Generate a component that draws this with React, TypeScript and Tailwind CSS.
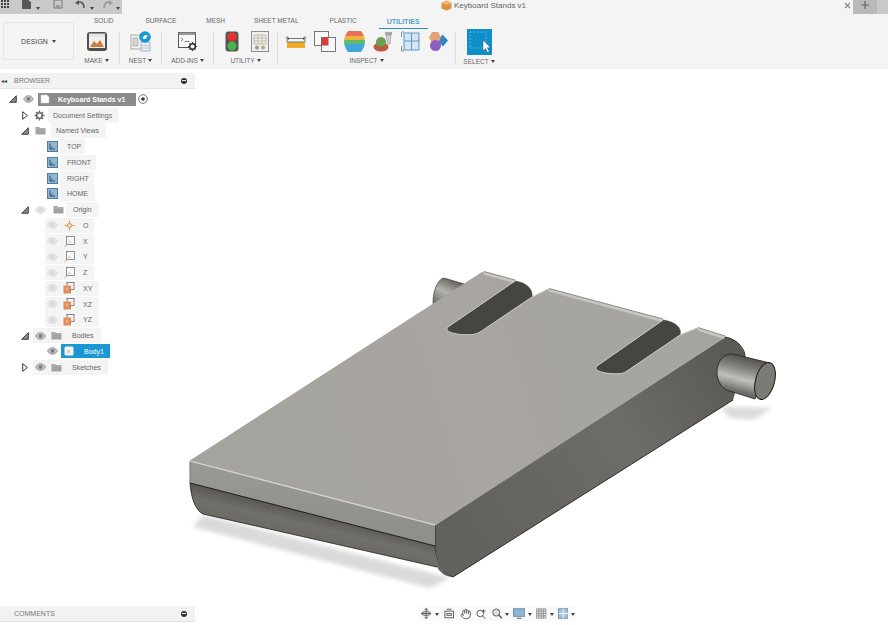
import React from "react";
import { Hand } from "lucide-react";

const Caret = () => <span className="ml-[2px] inline-block h-0 w-0 border-x-[2px] border-t-[3px] border-x-transparent border-t-[#444] align-middle" />;

const Eye = ({ faded, className = "" }: { faded?: boolean; className?: string }) => (
  <svg width="11" height="8" viewBox="0 0 11 8" className={className}>
    <path d="M0.5 4C2.5 1 4 .7 5.5 .7S8.5 1 10.5 4C8.5 7 7 7.3 5.5 7.3S2.5 7 .5 4Z" fill={faded ? "#e6e6e6" : "#c4c4c4"} stroke={faded ? "#d4d4d4" : "#8c8c8c"} strokeWidth=".8" />
    <circle cx="5.5" cy="4" r="1.9" fill={faded ? "#d8d8d8" : "#7c7c7c"} />
  </svg>
);
const Folder = ({ className = "" }: { className?: string }) => (
  <svg width="11" height="9" viewBox="0 0 11 9" className={className}>
    <path d="M.5 1h3.5l1 1h5.500v6.500H.5Z" fill="#a3a3a3" />
    <path d="M.5 3h10" stroke="#c4c4c4" strokeWidth=".6" />
  </svg>
);
const TriOpen = ({ className = "" }: { className?: string }) => (
  <svg width="8" height="8" viewBox="0 0 8 8" className={className}>
    <path d="M.7 7.300 7.300 .7v6.600Z" fill="#8a8a8a" stroke="#333" strokeWidth=".9" />
  </svg>
);
const TriClosed = ({ className = "" }: { className?: string }) => (
  <svg width="6" height="9" viewBox="0 0 6 9" className={className}>
    <path d="M.7 .7 5.300 4.500.7 8.300Z" fill="#fff" stroke="#222" strokeWidth=".9" />
  </svg>
);
const ViewIcon = ({ className = "" }: { className?: string }) => (
  <svg width="11" height="11" viewBox="0 0 11 11" className={className}>
    <rect x=".5" y=".5" width="10" height="10" fill="#8fb6d2" stroke="#4d7ea3" />
    <path d="M3 2.500v5.500h5" stroke="#24425a" strokeWidth=".9" fill="none" />
    <path d="M3 8l3-3" stroke="#24425a" strokeWidth=".6" />
  </svg>
);
const Gear = ({ className = "" }: { className?: string }) => (
  <svg width="11" height="11" viewBox="0 0 11 11" className={className}>
    <circle cx="5.500" cy="5.500" r="2.800" fill="none" stroke="#666" strokeWidth="1.500" />
    <path d="M5.500 .5v2M5.500 8.500v2M.5 5.500h2M8.500 5.500h2M2 2l1.400 1.400M7.600 7.600 9 9M9 2 7.600 3.400M3.400 7.600 2 9" stroke="#666" strokeWidth="1.300" />
  </svg>
);
const PointIcon = ({ className = "" }: { className?: string }) => (
  <svg width="11" height="11" viewBox="0 0 11 11" className={className}>
    <circle cx="5.500" cy="5.500" r="2.200" fill="#f1d9bd" stroke="#db8f45" strokeWidth=".9" />
    <path d="M5.500 .5v2.500M5.500 8v2.500M.5 5.500H3M8 5.500h2.500" stroke="#db8f45" strokeWidth=".9" />
  </svg>
);
const AxisIcon = ({ className = "" }: { className?: string }) => (
  <svg width="11" height="11" viewBox="0 0 11 11" className={className}>
    <rect x="2.500" y=".5" width="8" height="8" fill="#f7f7f7" stroke="#777" strokeWidth=".8" />
    <path d="M.5 10.500l3-2M4.500 7l2-2" stroke="#d09a6c" strokeWidth=".8" />
  </svg>
);
const PlaneIcon = ({ className = "" }: { className?: string }) => (
  <svg width="12" height="12" viewBox="0 0 12 12" className={className}>
    <rect x="4" y=".5" width="7" height="7" fill="#f7f7f7" stroke="#666" strokeWidth=".8" />
    <rect x=".5" y="3.500" width="7.500" height="8" fill="#df8e58" />
    <rect x="3" y="5.500" width="2" height="3" fill="#eab48c" />
  </svg>
);

const Label = ({ text, className = "" }: { text: string; className?: string }) => (
  <span className={`whitespace-nowrap text-[7px] leading-none text-[#666] ${className}`}>{text}</span>
);

const Row = ({ children }: { children: React.ReactNode }) => <div className="flex h-[15.75px] items-center">{children}</div>;

function ViewRow({ text, w }: { text: string; w: string }) {
  return (
    <Row>
      <ViewIcon className="ml-[47px]" />
      <div className={`ml-[2px] flex h-[15px] items-center bg-[#f4f4f4] pl-[7px] ${w}`}><Label text={text} /></div>
    </Row>
  );
}
function OriginRow({ text, icon, w }: { text: string; icon: React.ReactNode; w: string }) {
  return (
    <Row>
      <div className={`ml-[45px] flex h-[15px] items-center bg-[#f4f4f4] pl-[2px] ${w}`}>
        <Eye faded />
        <span className="ml-[5px] flex w-[12px] justify-center">{icon}</span>
        <Label text={text} className="ml-[8px]" />
      </div>
    </Row>
  );
}
function BranchRow({ text, closed, w }: { text: string; closed?: boolean; w: string }) {
  return (
    <Row>
      {closed ? <TriClosed className="ml-[22px] mr-[5px]" /> : <TriOpen className="ml-[21px] mr-[4px]" />}
      <div className={`flex h-[15px] items-center bg-[#f4f4f4] pl-[2px] ${w}`}>
        <Eye />
        <Folder className="ml-[5px]" />
        <Label text={text} className="ml-[10px]" />
      </div>
    </Row>
  );
}

function Tree() {
  return (
    <div className="mt-[2.500px]">
      <Row>
        <TriOpen className="ml-[9px]" />
        <Eye className="ml-[6px]" />
        <div className="ml-[4px] flex h-[13px] w-[98px] items-center bg-[#8b8b8b] pl-[2px]">
          <svg width="10" height="10" viewBox="0 0 10 10"><path d="M1 1h6l2 2v6H1Z" fill="#fff" stroke="#ccc" strokeWidth=".6" /></svg>
          <span className="ml-[8px] whitespace-nowrap text-[7px] font-bold leading-none text-white">Keyboard Stands v1</span>
        </div>
        <svg width="10" height="10" viewBox="0 0 10 10" className="ml-[2px]"><circle cx="5" cy="5" r="4.300" fill="#fff" stroke="#555" strokeWidth=".8" /><circle cx="5" cy="5" r="1.800" fill="#333" /></svg>
      </Row>
      <Row>
        <TriClosed className="ml-[22px]" />
        <Gear className="ml-[6px]" />
        <div className="ml-[3px] flex h-[15px] w-[71px] items-center bg-[#f4f4f4] pl-[5px]"><Label text="Document Settings" /></div>
      </Row>
      <Row>
        <TriOpen className="ml-[21px]" />
        <Folder className="ml-[6px]" />
        <div className="ml-[5px] flex h-[15px] w-[55px] items-center bg-[#f4f4f4] pl-[5px]"><Label text="Named Views" /></div>
      </Row>
      <ViewRow text="TOP" w="w-[25px]" />
      <ViewRow text="FRONT" w="w-[36px]" />
      <ViewRow text="RIGHT" w="w-[34px]" />
      <ViewRow text="HOME" w="w-[35px]" />
      <Row>
        <TriOpen className="ml-[21px]" />
        <Eye faded className="ml-[6px]" />
        <Folder className="ml-[7px]" />
        <div className="ml-[2px] flex h-[15px] w-[33px] items-center bg-[#f4f4f4] pl-[7px]"><Label text="Origin" /></div>
      </Row>
      <OriginRow text="O" w="w-[49px]" icon={<PointIcon />} />
      <OriginRow text="X" w="w-[49px]" icon={<AxisIcon />} />
      <OriginRow text="Y" w="w-[49px]" icon={<AxisIcon />} />
      <OriginRow text="Z" w="w-[49px]" icon={<AxisIcon />} />
      <OriginRow text="XY" w="w-[54px]" icon={<PlaneIcon />} />
      <OriginRow text="XZ" w="w-[54px]" icon={<PlaneIcon />} />
      <OriginRow text="YZ" w="w-[54px]" icon={<PlaneIcon />} />
      <BranchRow text="Bodies" w="w-[68px]" />
      <Row>
        <Eye className="ml-[47px]" />
        <div className="ml-[3px] flex h-[14px] w-[49px] items-center bg-[#1a97d5] pl-[3px]">
          <svg width="10" height="10" viewBox="0 0 10 10"><rect x=".5" y=".5" width="9" height="9" rx="1.500" fill="#f4f4f4" /><rect x="3" y="4" width="3" height="3" fill="#e7c9b8" /></svg>
          <span className="ml-[10px] whitespace-nowrap text-[7px] leading-none text-white">Body1</span>
        </div>
      </Row>
      <BranchRow text="Sketches" closed w="w-[75px]" />
    </div>
  );
}

function Model() {
  return (
    <svg className="absolute inset-0" width="888" height="625" viewBox="0 0 888 625">
      <defs>
        <filter id="sh" x="-10%" y="-10%" width="120%" height="120%"><feGaussianBlur stdDeviation="2" /></filter>
        <linearGradient id="top" x1="200" y1="480" x2="720" y2="330" gradientUnits="userSpaceOnUse">
          <stop offset="0" stopColor="#a4a39e" /><stop offset=".55" stopColor="#a9a5a1" /><stop offset="1" stopColor="#a4a5a1" />
        </linearGradient>
        <linearGradient id="band" x1="0" y1="0" x2="0" y2="1"><stop offset="0" stopColor="#9a9a94" /><stop offset="1" stopColor="#8e8e88" /></linearGradient>
        <linearGradient id="under" x1="304" y1="508" x2="296" y2="542" gradientUnits="userSpaceOnUse">
          <stop offset="0" stopColor="#55534e" /><stop offset=".45" stopColor="#716f6a" /><stop offset="1" stopColor="#6a6863" />
        </linearGradient>
        <linearGradient id="side" x1="470" y1="540" x2="730" y2="370" gradientUnits="userSpaceOnUse">
          <stop offset="0" stopColor="#63615d" /><stop offset=".6" stopColor="#6e6c68" /><stop offset="1" stopColor="#5c5a56" />
        </linearGradient>
        <linearGradient id="pin" x1="742" y1="356" x2="732" y2="396" gradientUnits="userSpaceOnUse">
          <stop offset="0" stopColor="#55534e" /><stop offset=".25" stopColor="#7e7c76" /><stop offset=".45" stopColor="#a8a7a1" /><stop offset=".55" stopColor="#c0bfba" /><stop offset=".68" stopColor="#a09f99" /><stop offset=".82" stopColor="#77756f" /><stop offset="1" stopColor="#5a5853" />
        </linearGradient>
        <linearGradient id="pinL" x1="450" y1="278" x2="438" y2="305" gradientUnits="userSpaceOnUse">
          <stop offset="0" stopColor="#63615c" /><stop offset=".5" stopColor="#b4b3ae" /><stop offset="1" stopColor="#6c6a65" />
        </linearGradient>
      </defs>

      <path d="M193 527 203 515 450 578 430 588Z" fill="#dadada" filter="url(#sh)" />
      <path d="M720 406 772 408 753 420 730 418Z" fill="#dcdcdc" filter="url(#sh)" />

      <path d="M433 303C433 290 438 279 444 278L464 284 470 290 436 312Z" fill="url(#pinL)" stroke="#222" strokeWidth=".6" />

      {/* slot interiors */}
      <path d="M515 281C528 283 533 290 532 297L480 332C475 335 470 335 462 334.500 452 334 444 331 448 327Z" fill="#474540" stroke="#222" strokeWidth=".5" />
      <path d="M663 320C677 322 682 329 680 335L627 371C623 374 619 374 611 373.500 601 373 593 370 597 366Z" fill="#474540" stroke="#222" strokeWidth=".5" />

      {/* side */}
      <path d="M435 525 725 337C738 339 746 350 745 360L733 400 453 577C443 574 437 562 435 546Z" fill="url(#side)" />
      <path d="M725 337C738 339 746 350 745 358M733 400 453 577" fill="none" stroke="#1e1e1c" strokeWidth=".9" />

      {/* underside */}
      <path d="M190 483 435 546C436 560 442 574 453 577 446 577 440 573 437 567L203 514C195 510 191 497 190 483Z" fill="url(#under)" />
      <path d="M190 483C191 497 195 510 203 514L437 567M435 525V546C436 560 442 574 453 577" fill="none" stroke="#1e1e1c" strokeWidth=".8" />

      {/* front band */}
      <path d="M190 461 435 525V546L190 483Z" fill="url(#band)" />
      <path d="M190 483 435 546" stroke="#17171a" strokeWidth="1" />
      <path d="M190 461V483" stroke="#76756f" strokeWidth="1" />

      {/* top face */}
      <path d="M190 461 483 272 515 281 448 327C444 331 452 334 462 334.500 470 335 475 335 480 332L532 297 548 289 663 320 597 366C593 370 601 373 611 373.500 619 374 623 374 627 371L680 335 697 328 725 337 435 525Z" fill="url(#top)" stroke="#c9c9c5" strokeWidth="1" strokeLinejoin="round" />
      <path d="M190 461 435 525" stroke="#d2d2ce" strokeWidth="1.200" />
      <path d="M190 461 483 272M435 525 725 337" stroke="#8b8a86" strokeWidth=".7" />
      <path d="M484 273.500 514 282M549 290.500 662 321M698 329.500 724 338" stroke="#c6c6c2" strokeWidth="2.200" />
      <path d="M484 271.500 515 280M549 288.500 663 319M698 327.500 725 336" stroke="#3a3a38" strokeWidth=".6" />

      {/* right pin */}
      <path d="M733 354 770 363 755 399 733 392C722 390 717 382 717 372 717 361 724 353 733 354Z" fill="url(#pin)" stroke="#222" strokeWidth=".8" />
      <ellipse cx="765" cy="381" rx="9.500" ry="19" transform="rotate(15 765 381)" fill="#7c7a74" stroke="#161614" strokeWidth="1" />
    </svg>
  );
}

const TabLabel = ({ text, className = "" }: { text: string; className?: string }) => (
  <span className={`whitespace-nowrap text-[6.500px] leading-none text-[#666] ${className}`}>{text}</span>
);
const GroupName = ({ text }: { text: string }) => (
  <div className="mt-[5.500px] flex items-center justify-center whitespace-nowrap text-[6.500px] leading-none text-[#666]">{text}<Caret /></div>
);

const MakeIcon = () => (
  <svg width="22" height="21" viewBox="0 0 22 21"><rect x="1" y="1" width="20" height="19" rx="3" fill="#4f4f4f" /><rect x="3" y="2.500" width="16" height="3.500" fill="#e4e4e4" /><rect x="3" y="6" width="16" height="11" fill="#f4efe9" /><path d="M4 16l4-6 3 3 3-4 4 7Z" fill="#cf7a3c" /></svg>
);
const NestIcon = () => (
  <svg width="21" height="21" viewBox="0 0 21 21"><rect x="1" y="4" width="11" height="14" fill="#f4f4f4" stroke="#a9a9a9" /><rect x="3" y="7" width="5" height="8" fill="#d5d5d5" stroke="#9a9a9a" strokeWidth=".6" /><rect x="11" y="11" width="9" height="9" fill="#eee" stroke="#9fb8c8" /><path d="M11 14.500h9M11 17h9" stroke="#9fb8c8" strokeWidth=".7" /><circle cx="15" cy="6" r="5.800" fill="#1a97d5" /><path d="M12.500 7c1-2.500 2.500-3 5-3l-1 3c-.8 1.500-3 1.300-4 0Z" fill="#fff" /></svg>
);
const AddinIcon = () => (
  <svg width="20" height="21" viewBox="0 0 20 21"><rect x=".5" y="1.500" width="17" height="15" fill="#f8f8f8" stroke="#555" /><rect x=".5" y="1.500" width="17" height="2.500" fill="#999" /><path d="M3 7l2 1.500L3 10M6.500 10.500h5" stroke="#555" strokeWidth=".7" fill="none" /><circle cx="14.500" cy="15.500" r="2.800" fill="#f2f2f2" stroke="#333" strokeWidth="1.500" /><path d="M14.500 11v1.500M14.500 18.500V20M10 15.500h1.500M17.500 15.500H19M11.500 12.500l1 1M16.500 17.500l1 1M17.500 12.500l-1 1M12.500 17.500l-1 1" stroke="#333" strokeWidth="1.200" /></svg>
);
const Light = () => (
  <svg width="14" height="21" viewBox="0 0 14 21"><rect x=".5" y=".5" width="13" height="20" rx="3" fill="#555" /><circle cx="7" cy="6" r="4.500" fill="#e9322d" /><circle cx="7" cy="15" r="4.500" fill="#49b452" /></svg>
);
const TableIcon = () => (
  <svg width="18" height="21" viewBox="0 0 18 21"><rect x=".5" y=".5" width="17" height="20" fill="#eee" stroke="#8f8f8f" /><path d="M3 4h12v9H3ZM3 7h12M3 10h12M7 4v9M11 4v9" fill="none" stroke="#b0a98e" strokeWidth=".7" /><circle cx="6" cy="16.500" r="2" fill="#9a9a9a" /><circle cx="12" cy="16.500" r="2" fill="#b5a98c" /></svg>
);
const Measure = () => (
  <svg width="20" height="21" viewBox="0 0 20 21"><rect x="1" y="11" width="18" height="6" fill="#f0ad2c" /><path d="M1 11h18" stroke="#777" /><path d="M1 5v6M19 5v6M1 7.500h18" stroke="#555" strokeWidth=".8" /><path d="M1 7.500l2-1.500v3ZM19 7.500l-2-1.500v3Z" fill="#555" /></svg>
);
const Interf = () => (
  <svg width="22" height="21" viewBox="0 0 22 21"><rect x=".5" y=".5" width="14" height="14" fill="#f8f8f8" stroke="#777" /><rect x="7.500" y="6.500" width="14" height="14" fill="#f8f8f8" stroke="#777" /><rect x="7.500" y="6.500" width="7" height="8" fill="#d13f3f" /></svg>
);
const Zebra = () => (
  <svg width="21" height="21" viewBox="0 0 21 21"><defs><clipPath id="zc"><path d="M4 0h13c2 3 4 6 4 10.500S19 18 17 21H4C2 18 0 15 0 10.500S2 3 4 0Z" /></clipPath></defs><g clipPath="url(#zc)"><rect width="21" height="5" fill="#ea6f56" /><rect y="5" width="21" height="4" fill="#efb23c" /><rect y="9" width="21" height="4" fill="#5dbb6a" /><rect y="13" width="21" height="8" fill="#3fa6dd" /></g></svg>
);
const Access = () => (
  <svg width="20" height="21" viewBox="0 0 20 21"><rect x="12" y="1" width="7" height="3" fill="#a9a9a9" /><path d="M13 4h5l-1 9h-2.500Z" fill="#cfcfcf" stroke="#888" strokeWidth=".5" /><ellipse cx="8" cy="16" rx="7.500" ry="4.500" fill="#c0563f" /><circle cx="8" cy="11" r="5" fill="#68a24f" /></svg>
);
const Section = () => (
  <svg width="19" height="21" viewBox="0 0 19 21"><rect x="3" y="2" width="15" height="17" fill="#d4e6f3" stroke="#5f99c2" /><path d="M10.500 2v17M3 10h15" stroke="#5f99c2" /><path d="M3 1H.5v5M.5 15v5H3" fill="none" stroke="#7d8d98" strokeWidth=".9" /></svg>
);
const Colors = () => (
  <svg width="20" height="21" viewBox="0 0 20 21"><path d="M14.500 3.500 20 9.500l-5 6-5.500-6Z" fill="#2f87c4" /><path d="M4 1h6l3 5.500-3 5.500H4L1 6.500Z" fill="#e6a178" /><circle cx="7.500" cy="14.500" r="5.500" fill="#8c5ec0" /></svg>
);
const SelectIcon = () => (
  <svg width="25" height="26" viewBox="0 0 25 26"><rect width="25" height="26" fill="#0d8fca" /><rect x="3" y="3" width="16" height="16" fill="none" stroke="#6dc0e5" strokeWidth=".8" strokeDasharray="2 1.500" /><path d="M16 11v11l2.500-2.500 2 4 1.800-.8-2-4h3.200Z" fill="#fff" stroke="#333" strokeWidth=".4" /></svg>
);

const Divider = () => <div className="mt-[4px] h-[32px] w-px bg-[#dedede]" />;

function Toolbar() {
  return (
    <div className="h-[69px] bg-[#f4f4f4]">
      <div className="relative flex h-[14px] items-start justify-between">
        <div className="flex h-[14px] w-[122px] items-start bg-[#c9c9c9]">
          <svg width="9" height="8" viewBox="0 0 9 8" className="ml-[1px]"><path d="M0 0h2v2H0zM3 0h2v2H3zM6 0h2v2H6zM0 3h2v2H0zM3 3h2v2H3zM6 3h2v2H6zM0 6h2v2H0zM3 6h2v2H3zM6 6h2v2H6z" fill="#444" /></svg>
          <svg width="10" height="9" viewBox="0 0 10 9" className="ml-[12px]"><path d="M0 0h6l3 2v7H0Z" fill="#555" /></svg>
          <span className="ml-[2px] mt-[-4px]"><Caret /></span>
          <svg width="10" height="9" viewBox="0 0 10 9" className="ml-[13px]"><path d="M1 0h8v8H1Z" fill="none" stroke="#777" /><path d="M3 5h4v3H3Z" fill="#999" /></svg>
          <svg width="11" height="10" viewBox="0 0 11 10" className="ml-[12px]"><path d="M2 3c3-2 7-1 7 5" fill="none" stroke="#555" strokeWidth="1.500" /><path d="M0 3l4-3v5Z" fill="#555" /></svg>
          <span className="ml-[2px] mt-[-4px]"><Caret /></span>
          <svg width="11" height="10" viewBox="0 0 11 10" className="ml-[8px]"><path d="M9 3C6 1 2 2 2 8" fill="none" stroke="#999" strokeWidth="1.500" /><path d="M11 3 7 0v5Z" fill="#999" /></svg>
          <span className="ml-[1px] mt-[-4px]"><Caret /></span>
        </div>
        <div className="absolute left-[441px] top-0 flex h-[11px] items-center">
          <svg width="11" height="11" viewBox="0 0 11 11"><path d="M5.500 .5 10.500 3v5.500L5.500 10.500.5 8.500V3Z" fill="#df8f3f" /><path d="M.5 3l5 2 5-2-5-2.500Z" fill="#f1b679" /></svg>
          <span className="ml-[2px] whitespace-nowrap text-[8px] leading-none text-[#666]">Keyboard Stands v1</span>
        </div>
        <div className="flex items-start">
          <svg width="7" height="7" viewBox="0 0 7 7" className="mr-[2px] mt-[2px]"><path d="M1 1l5 5M6 1 1 6" stroke="#888" strokeWidth="1.200" /></svg>
          <div className="flex h-[14px] w-[35px] bg-[#c9c9c9]">
            <div className="flex h-[14px] w-[24px] items-start justify-center bg-[#b9b9b9] pt-[1px]">
              <svg width="8" height="8" viewBox="0 0 8 8"><path d="M4 0v8M0 4h8" stroke="#666" strokeWidth="1.200" /></svg>
            </div>
          </div>
        </div>
      </div>
      <div className="mt-[2px] flex h-[12px] items-start">
        <TabLabel text="SOLID" className="ml-[94px] mt-[2px]" />
        <TabLabel text="SURFACE" className="ml-[32px] mt-[2px]" />
        <TabLabel text="MESH" className="ml-[30px] mt-[2px]" />
        <TabLabel text="SHEET METAL" className="ml-[29px] mt-[2px]" />
        <TabLabel text="PLASTIC" className="ml-[31px] mt-[2px]" />
        <div className="ml-[22px] flex h-[13px] w-[49px] items-start justify-center border-b-[1.500px] border-[#2b8fb8] pt-[2px]">
          <span className="whitespace-nowrap text-[7px] font-bold leading-none text-[#4fa3c7]">UTILITIES</span>
        </div>
      </div>
      <div className="flex h-[41px]">
        <div className="ml-[3px] mt-[-6px] flex h-[38px] w-[71px] items-center justify-center rounded-[2px] border border-[#e6e6e6]">
          <span className="text-[7px] leading-none text-[#444]">DESIGN</span><span className="ml-[2px]"><Caret /></span>
        </div>
        <div className="w-[45px] pt-[3px]"><div className="flex justify-center"><MakeIcon /></div><GroupName text="MAKE" /></div>
        <Divider />
        <div className="w-[41px] pt-[3px]"><div className="flex justify-center"><NestIcon /></div><GroupName text="NEST" /></div>
        <Divider />
        <div className="w-[51px] pt-[3px]"><div className="flex justify-center"><AddinIcon /></div><GroupName text="ADD-INS" /></div>
        <Divider />
        <div className="w-[63px] pt-[3px]"><div className="flex justify-center gap-[12px] pl-[3px]"><Light /><TableIcon /></div><GroupName text="UTILITY" /></div>
        <Divider />
        <div className="w-[177px] pt-[3px]">
          <div className="flex justify-center gap-[8px]"><Measure /><Interf /><Zebra /><Access /><Section /><Colors /></div>
          <GroupName text="INSPECT" />
        </div>
        <Divider />
        <div className="w-[46px]"><div className="flex h-[25px] justify-center pt-[1px]"><SelectIcon /></div><div className="mt-[4.500px]"><GroupName text="SELECT" /></div></div>
      </div>
    </div>
  );
}

function PanelHeader({ title, back }: { title: string; back?: boolean }) {
  return (
    <div className="flex h-[16px] w-[195px] items-center border-b border-[#e4e4e4] bg-[#f2f2f2]">
      <span className="ml-[1px] w-[13px] text-[6px] leading-none text-[#444]">{back ? "◂◂" : ""}</span>
      <span className="whitespace-nowrap text-[7px] leading-none text-[#777]">{title}</span>
      <span className="ml-auto mr-[8px] flex h-[6px] w-[6px] items-center justify-center rounded-full bg-[#333]"><span className="h-px w-[4px] bg-[#eee]" /></span>
    </div>
  );
}

function NavBar() {
  const c = "#5a5a5a";
  return (
    <div className="absolute bottom-[4px] left-[419px] flex h-[15px] w-[156px] items-center bg-[#fafafa] pl-[2px]">
      <svg width="11" height="11" viewBox="0 0 11 11"><path d="M5.500 0v11M0 5.500h11M3.500 2 5.500 0l2 2M3.500 9l2 2 2-2" stroke={c} fill="none" /><ellipse cx="5.500" cy="5.500" rx="5" ry="2" fill="none" stroke={c} /></svg>
      <span className="ml-[2px]"><Caret /></span>
      <svg width="11" height="11" viewBox="0 0 11 11" className="ml-[5px]"><rect x="1" y="3" width="9" height="7" fill="none" stroke={c} /><path d="M3 1h5M3 5.500h5v2H3Z" stroke={c} fill="none" /></svg>
      <Hand size={12} color={c} className="ml-[5px]" />
      <svg width="11" height="11" viewBox="0 0 11 11" className="ml-[5px]"><circle cx="4.500" cy="5.500" r="3.500" fill="none" stroke={c} /><path d="M7 8l3 3M8 1v4M6 3h4" stroke={c} /></svg>
      <svg width="11" height="11" viewBox="0 0 11 11" className="ml-[5px]"><circle cx="4.500" cy="4.500" r="3.800" fill="#ddd" stroke={c} /><path d="M7 7l3.500 3.500" stroke={c} strokeWidth="1.500" /></svg>
      <span className="ml-[1px]"><Caret /></span>
      <svg width="13" height="11" viewBox="0 0 13 11" className="ml-[4px]"><rect x=".5" y=".5" width="12" height="8" fill="#8fb4d6" stroke="#6d8ba8" /><path d="M4 10.500h5" stroke={c} /></svg>
      <span className="ml-[1px]"><Caret /></span>
      <svg width="11" height="11" viewBox="0 0 11 11" className="ml-[4px]"><path d="M.5 .5h10v10H.5ZM3 .5v10M5.500 .5v10M8 .5v10M.5 3h10M.5 5.500h10M.5 8h10" fill="#ddd" stroke="#777" strokeWidth=".6" /></svg>
      <span className="ml-[1px]"><Caret /></span>
      <svg width="11" height="11" viewBox="0 0 11 11" className="ml-[4px]"><rect x=".5" y=".5" width="10" height="10" fill="#a9c4dd" stroke="#6d8ba8" /><path d="M5.500 .5v10M.5 5.500h10" stroke="#fff" /></svg>
      <span className="ml-[1px]"><Caret /></span>
    </div>
  );
}

export default function App() {
  return (
    <div className="relative h-[625px] w-[888px] overflow-hidden bg-white font-['Liberation_Sans',sans-serif]">
      <Model />
      <div className="relative">
        <Toolbar />
        <div className="mt-[4px]">
          <PanelHeader title="BROWSER" back />
          <Tree />
        </div>
      </div>
      <div className="absolute bottom-[3px] left-0"><PanelHeader title="COMMENTS" /></div>
      <NavBar />
    </div>
  );
}
